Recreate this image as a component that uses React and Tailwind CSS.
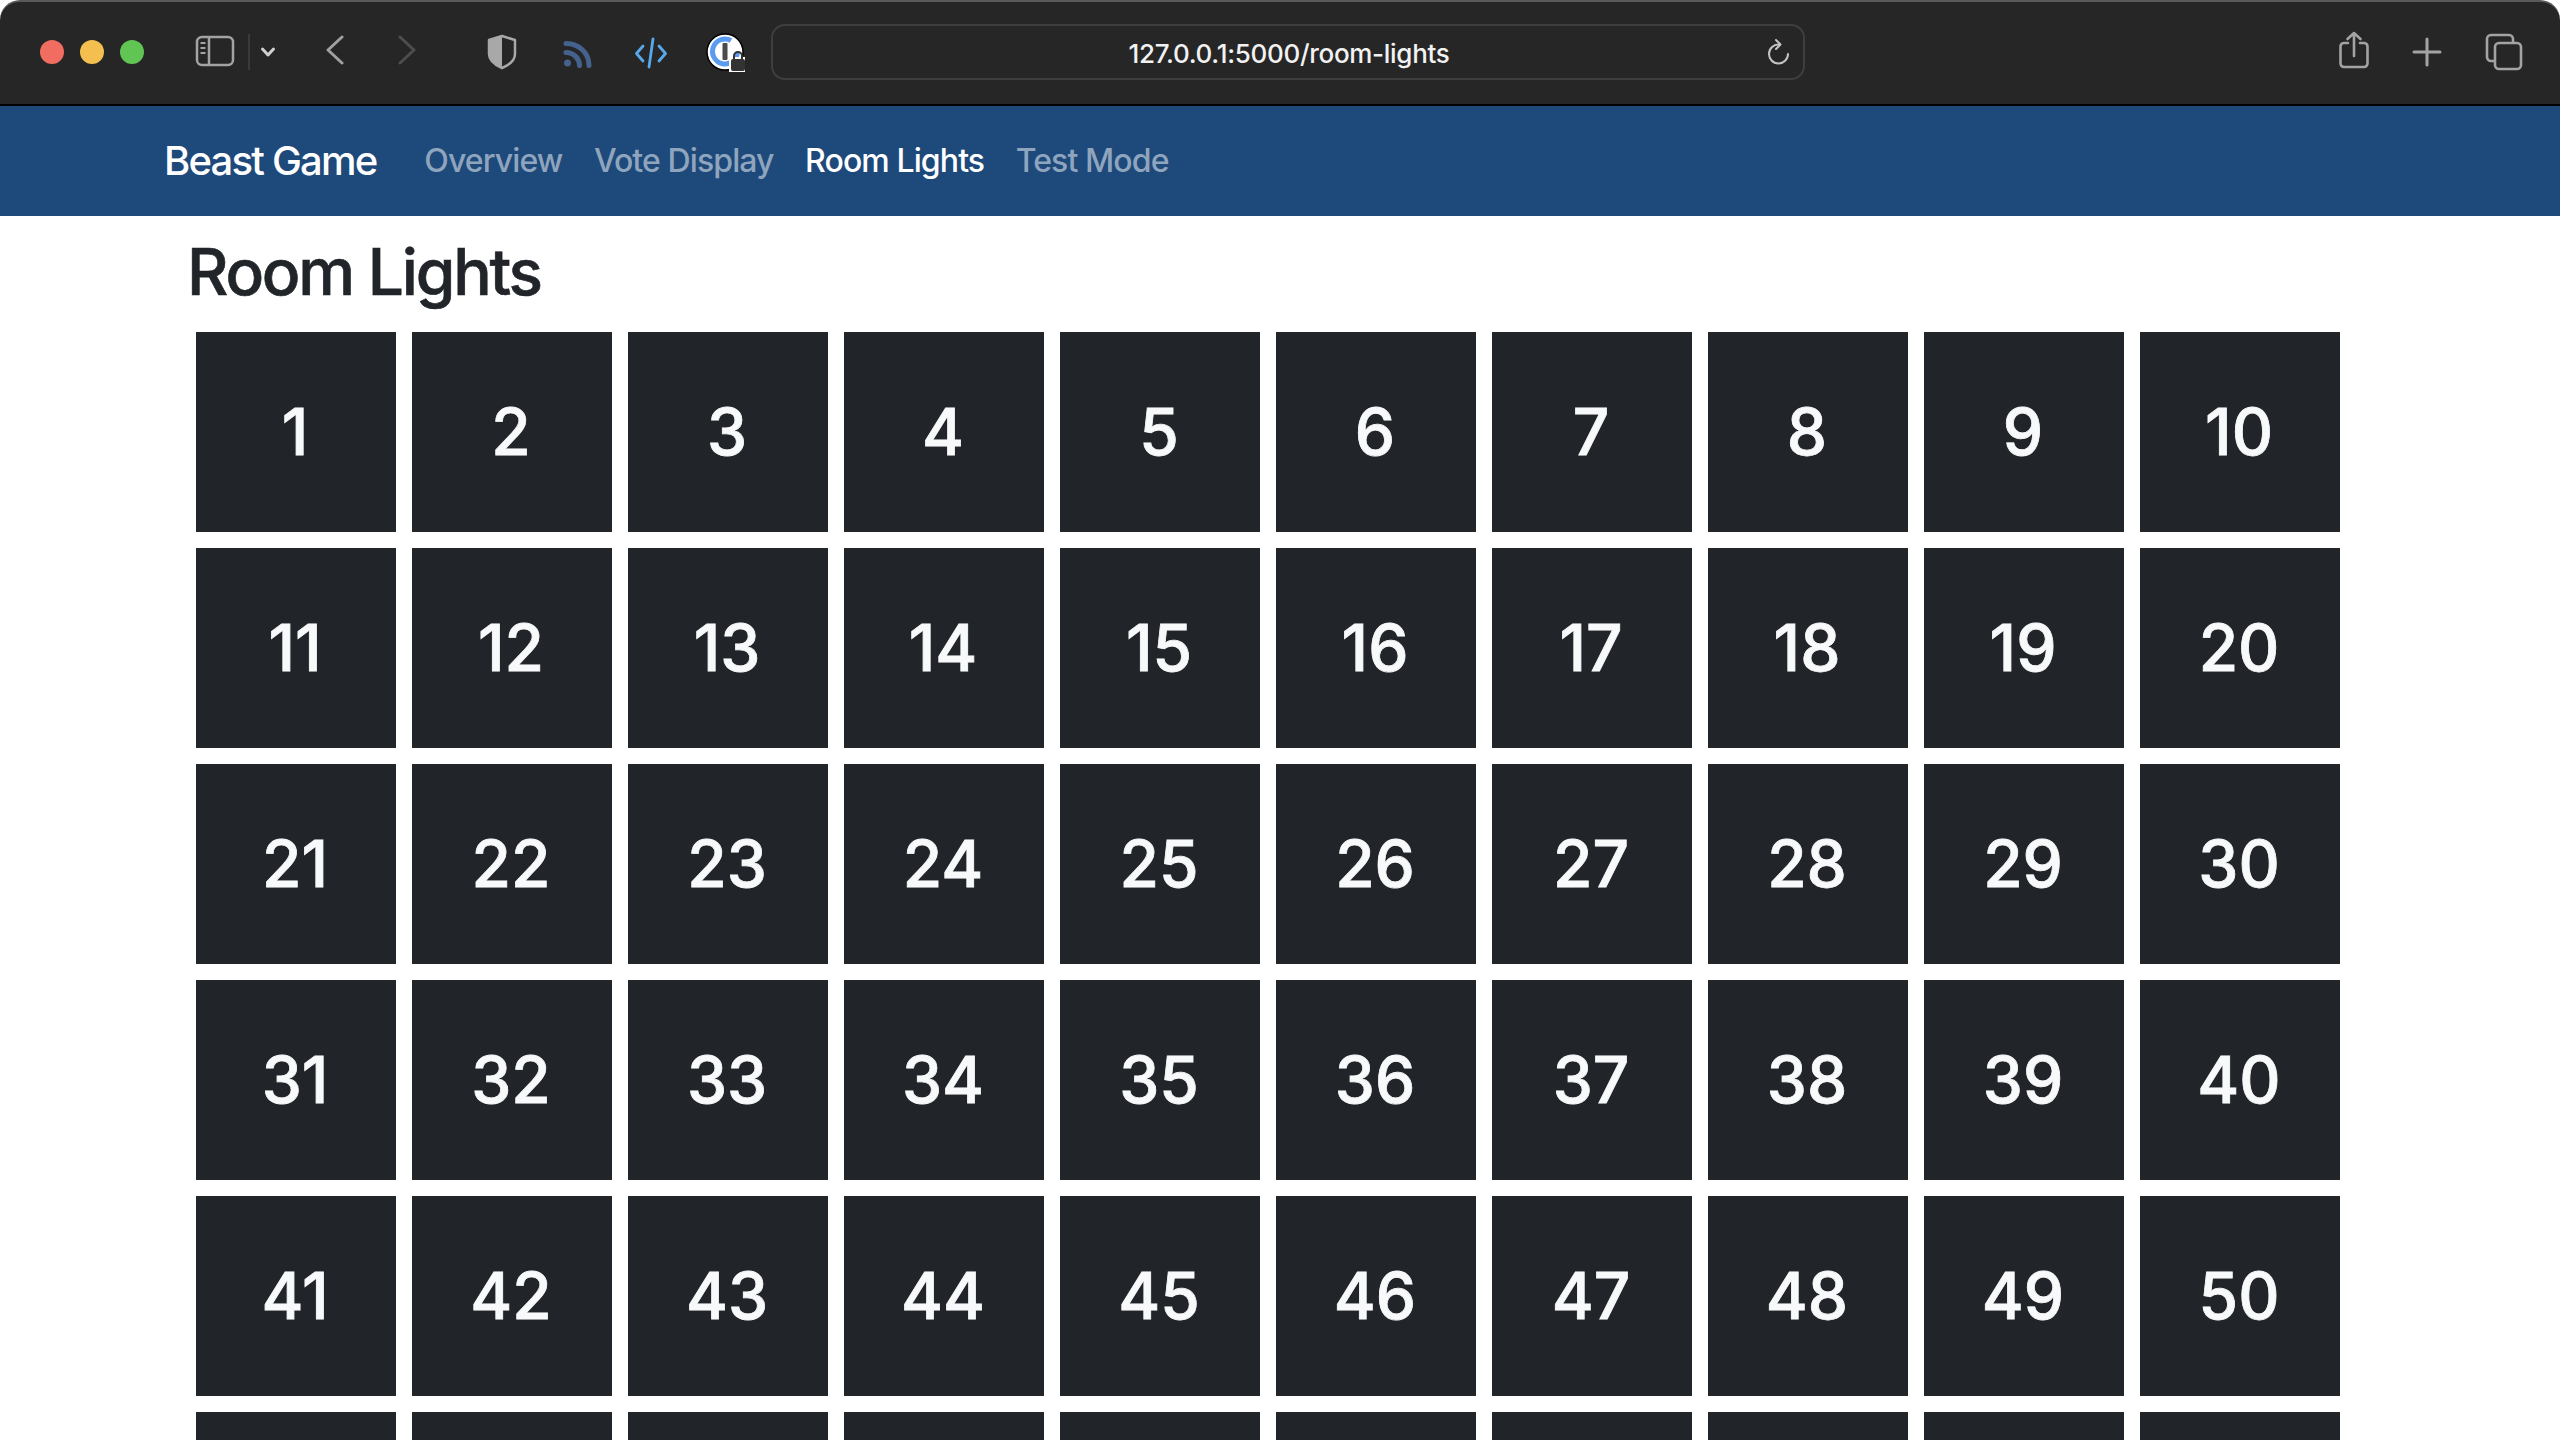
const inter = { fontFamily: '"Inter", "Liberation Sans", sans-serif' };

function Chrome() {
  return (
    <div className="h-[106px] shrink-0 bg-white">
      <div className="relative flex h-[106px] items-start rounded-t-[20px] border-t-2 border-b-2 border-t-[#5a5a5a] border-b-black bg-[#262626]">
        <div className="ml-10 mt-[38px] flex gap-4">
          <span className="h-6 w-6 rounded-full bg-[#f26d61]" />
          <span className="h-6 w-6 rounded-full bg-[#f5bf4f]" />
          <span className="h-6 w-6 rounded-full bg-[#61c554]" />
        </div>
        <svg className="absolute left-[195px] top-[33px]" width="40" height="32" viewBox="0 0 40 32" fill="none" stroke="#a3a3a3" strokeWidth="2.5">
          <rect x="2" y="2" width="36" height="28" rx="5" />
          <path d="M14 2v28" />
          <path d="M5.5 8h5M5.5 13h5M5.5 18h5" strokeWidth="2" />
        </svg>
        <div className="absolute left-[248px] top-[32px] h-[36px] w-[2px] bg-[#3a3a3a]" />
        <svg className="absolute left-[260px] top-[44px]" width="16" height="12" viewBox="0 0 16 12" fill="none" stroke="#d0d0d0" strokeWidth="3" strokeLinecap="round" strokeLinejoin="round">
          <path d="M2.5 3 8 9l5.5-6" />
        </svg>
        <svg className="absolute left-[325px] top-[33px]" width="20" height="30" viewBox="0 0 20 30" fill="none" stroke="#a0a0a0" strokeWidth="3" strokeLinecap="round" strokeLinejoin="round">
          <path d="M17 2 3 15l14 13" />
        </svg>
        <svg className="absolute left-[397px] top-[33px]" width="20" height="30" viewBox="0 0 20 30" fill="none" stroke="#4d4d4d" strokeWidth="3" strokeLinecap="round" strokeLinejoin="round">
          <path d="M3 2l14 13L3 28" />
        </svg>
        <svg className="absolute left-[486px] top-[32px]" width="32" height="36" viewBox="0 0 32 36" fill="none">
          <path d="M16 2 29 6v14c0 6-6 11-13 14C9 31 3 26 3 20V6Z" stroke="#a8a8a8" strokeWidth="2.5" strokeLinejoin="round" />
          <path d="M16 2 3 6v14c0 6 6 11 13 14Z" fill="#a8a8a8" />
        </svg>
        <svg className="absolute left-[562px] top-[37px]" width="32" height="30" viewBox="0 0 32 30" fill="none" stroke="#45628f" strokeWidth="5" strokeLinecap="round">
          <path d="M4 4.500C17 4.500 27 14 27 26.500" />
          <path d="M4 13.500c7.500 0 13.500 6 13.500 13" />
          <circle cx="5.500" cy="24" r="3.500" fill="#45628f" stroke="none" />
        </svg>
        <svg className="absolute left-[634px] top-[35px]" width="34" height="32" viewBox="0 0 34 32" fill="none" stroke="#58a9ec" strokeWidth="2.800" strokeLinecap="round" strokeLinejoin="round">
          <path d="M9 9 2.500 16.500 9 24M25 9l6.500 7.500L25 24M19 2l-4 28" />
        </svg>
        <svg className="absolute left-[706px] top-[31px]" width="40" height="40" viewBox="0 0 40 40" fill="none">
          <circle cx="19" cy="19" r="18" fill="white" stroke="black" strokeWidth="1.500" />
          <path d="M25 7.500A12.500 12.500 0 1 0 31.500 19" stroke="#5b9bf0" strokeWidth="5" />
          <rect x="16.500" y="10" width="5" height="17" rx="1" fill="#4b4b4b" />
          <rect x="23" y="24" width="16" height="15" fill="white" />
          <rect x="25" y="26" width="14" height="12" rx="2" fill="#333333" />
          <path d="M28 26v-3a4 4 0 0 1 8 0v3" stroke="#333333" strokeWidth="2" />
        </svg>
        <div className="absolute left-[771px] top-[22px] flex h-[56px] w-[1034px] items-center justify-center rounded-[14px] border-2 border-[#3e3e3e] pt-[2px] pl-[2px] text-[26px] font-medium tracking-[-0.3px] text-[#f2f2f2]" style={inter}>
          127.0.0.1:5000/room-lights
          <svg className="absolute right-[11px] top-[12px]" width="26" height="30" viewBox="0 0 26 30" fill="none" stroke="#c4c4c4" strokeWidth="2" strokeLinecap="round" strokeLinejoin="round">
            <path d="M13 6.500A9.500 9.500 0 1 0 22 16" />
            <path d="M10 2l4.500 4.500L10 11" />
          </svg>
        </div>
        <svg className="absolute left-[2338px] top-[29px]" width="32" height="40" viewBox="0 0 32 40" fill="none" stroke="#a3a3a3" strokeWidth="2.600" strokeLinecap="round" strokeLinejoin="round">
          <path d="M10 12H6a3.500 3.500 0 0 0-3.500 3.500v17A3.500 3.500 0 0 0 6 36h20a3.500 3.500 0 0 0 3.500-3.500v-17A3.500 3.500 0 0 0 26 12h-4" />
          <path d="M16 25V2M9.500 8 16 2l6.500 6" />
        </svg>
        <svg className="absolute left-[2412px] top-[35px]" width="30" height="30" viewBox="0 0 30 30" fill="none" stroke="#a3a3a3" strokeWidth="3" strokeLinecap="round">
          <path d="M15 2v26M2 15h26" />
        </svg>
        <svg className="absolute left-[2485px] top-[31px]" width="38" height="38" viewBox="0 0 38 38" fill="none" stroke="#a3a3a3" strokeWidth="2.600" strokeLinejoin="round">
          <path d="M9 28H6a4 4 0 0 1-4-4V6a4 4 0 0 1 4-4h18a4 4 0 0 1 4 4v4" />
          <rect x="10" y="10" width="26" height="26" rx="4" />
        </svg>
      </div>
    </div>
  );
}

function Nav() {
  return (
    <nav className="flex h-[110px] shrink-0 items-center gap-[48px] bg-[#1e497b] pl-[164px]" style={inter}>
      <span className="text-[40px] font-medium tracking-[-1.800px] text-white">Beast Game</span>
      <div className="flex gap-[31.500px] text-[32px] font-medium tracking-[-0.900px]">
        <span className="text-[#8fa4bd]">Overview</span>
        <span className="text-[#8fa4bd]">Vote Display</span>
        <span className="text-white">Room Lights</span>
        <span className="text-[#8fa4bd]">Test Mode</span>
      </div>
    </nav>
  );
}

export default function App() {
  const cells = Array.from({ length: 60 }, (_, i) => i + 1);
  return (
    <div className="flex h-[1440px] w-[2560px] flex-col overflow-hidden bg-white">
      <Chrome />
      <Nav />
      <main className="pl-[187px]" style={inter}>
        <h1 className="mt-[14px] mb-[18px] h-[84px] text-[64px] leading-[84px] font-medium tracking-[-2.200px] text-[#212529] [-webkit-text-stroke:0.6px_#212529]">Room Lights</h1>
        <div className="ml-[9px] grid grid-cols-[repeat(10,200px)] gap-4">
          {cells.map((n) => (
            <div key={n} className="flex h-[200px] items-center justify-center bg-[#212529] pr-[2px] text-[64px] font-medium text-[#f8f9fa] [-webkit-text-stroke:0.8px_#f8f9fa]">
              {n}
            </div>
          ))}
        </div>
      </main>
    </div>
  );
}
